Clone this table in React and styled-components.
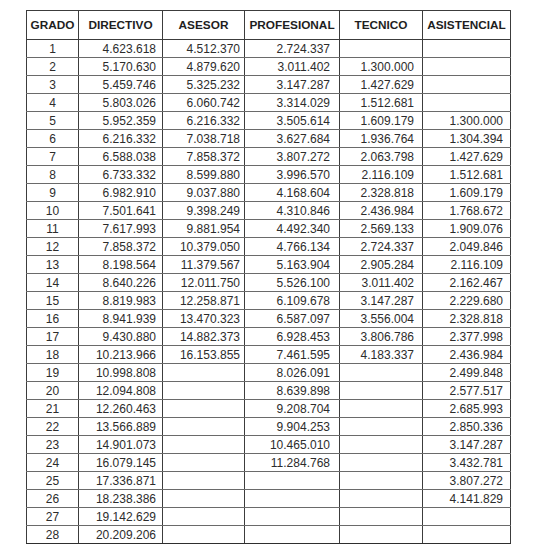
import React from 'react';
import styled, { createGlobalStyle } from 'styled-components';

const GlobalStyle = createGlobalStyle`
  html, body {
    margin: 0;
    padding: 0;
    background: #ffffff;
  }
  body {
    font-family: "Liberation Sans", Arial, sans-serif;
  }
`;

const Page = styled.div`
  padding: 10px 0 0 26px;
  width: 555px;
  height: 553px;
  box-sizing: border-box;
  background: #fff;
`;

const Table = styled.table`
  border-collapse: collapse;
  table-layout: fixed;
  width: 484px;
  color: #262626;
  font-family: "Liberation Sans", Arial, sans-serif;
`;

const HeadCell = styled.th`
  height: 28px;
  padding: 0;
  border: 1px solid #3c3c3c;
  font-size: 11.8px;
  font-weight: 700;
  text-align: center;
  vertical-align: middle;
  color: #1e1e1e;
  white-space: nowrap;
`;

const Cell = styled.td`
  height: 16px;
  padding: 1px ${p => p.$pad || 0}px 0 0;
  border-left: 1px solid #3c3c3c;
  border-right: 1px solid #3c3c3c;
  border-top: 1px solid #6a6a6a;
  border-bottom: 1px solid #6a6a6a;
  font-size: 12px;
  line-height: 16px;
  text-align: ${p => p.$align || 'right'};
  white-space: nowrap;
  color: #2c2c2c;
`;

const LastRow = styled.tr`
  td {
    border-bottom: 1px solid #2e2e2e;
  }
`;

const columns = [
  { key: 'GRADO', width: 52, align: 'center', pad: 0 },
  { key: 'DIRECTIVO', width: 84, pad: 6 },
  { key: 'ASESOR', width: 82, pad: 4 },
  { key: 'PROFESIONAL', width: 95, pad: 9 },
  { key: 'TECNICO', width: 83, pad: 8 },
  { key: 'ASISTENCIAL', width: 88, pad: 7 },
];

const directivo = ['4.623.618', '5.170.630', '5.459.746', '5.803.026', '5.952.359', '6.216.332', '6.588.038', '6.733.332', '6.982.910', '7.501.641', '7.617.993', '7.858.372', '8.198.564', '8.640.226', '8.819.983', '8.941.939', '9.430.880', '10.213.966', '10.998.808', '12.094.808', '12.260.463', '13.566.889', '14.901.073', '16.079.145', '17.336.871', '18.238.386', '19.142.629', '20.209.206'];
const asesor = ['4.512.370', '4.879.620', '5.325.232', '6.060.742', '6.216.332', '7.038.718', '7.858.372', '8.599.880', '9.037.880', '9.398.249', '9.881.954', '10.379.050', '11.379.567', '12.011.750', '12.258.871', '13.470.323', '14.882.373', '16.153.855'];
const profesional = ['2.724.337', '3.011.402', '3.147.287', '3.314.029', '3.505.614', '3.627.684', '3.807.272', '3.996.570', '4.168.604', '4.310.846', '4.492.340', '4.766.134', '5.163.904', '5.526.100', '6.109.678', '6.587.097', '6.928.453', '7.461.595', '8.026.091', '8.639.898', '9.208.704', '9.904.253', '10.465.010', '11.284.768'];
const tecnico = ['', '1.300.000', '1.427.629', '1.512.681', '1.609.179', '1.936.764', '2.063.798', '2.116.109', '2.328.818', '2.436.984', '2.569.133', '2.724.337', '2.905.284', '3.011.402', '3.147.287', '3.556.004', '3.806.786', '4.183.337'];
const asistencial = ['', '', '', '', '1.300.000', '1.304.394', '1.427.629', '1.512.681', '1.609.179', '1.768.672', '1.909.076', '2.049.846', '2.116.109', '2.162.467', '2.229.680', '2.328.818', '2.377.998', '2.436.984', '2.499.848', '2.577.517', '2.685.993', '2.850.336', '3.147.287', '3.432.781', '3.807.272', '4.141.829'];

const rows = Array.from({ length: 28 }, (_, i) => [
  String(i + 1),
  directivo[i] || '',
  asesor[i] || '',
  profesional[i] || '',
  tecnico[i] || '',
  asistencial[i] || '',
]);

const App = () => {
  return (
    <Page>
      <GlobalStyle />
      <Table>
        <colgroup>
          {columns.map(c => (
            <col key={c.key} style={{ width: c.width }} />
          ))}
        </colgroup>
        <thead>
          <tr>
            {columns.map(c => (
              <HeadCell key={c.key}>{c.key}</HeadCell>
            ))}
          </tr>
        </thead>
        <tbody>
          {rows.map((row, r) => {
            const cells = row.map((v, i) => (
              <Cell key={i} $align={columns[i].align} $pad={columns[i].pad}>{v}</Cell>
            ));
            return r === rows.length - 1
              ? <LastRow key={r}>{cells}</LastRow>
              : <tr key={r}>{cells}</tr>;
          })}
        </tbody>
      </Table>
    </Page>
  );
};

export default App;
